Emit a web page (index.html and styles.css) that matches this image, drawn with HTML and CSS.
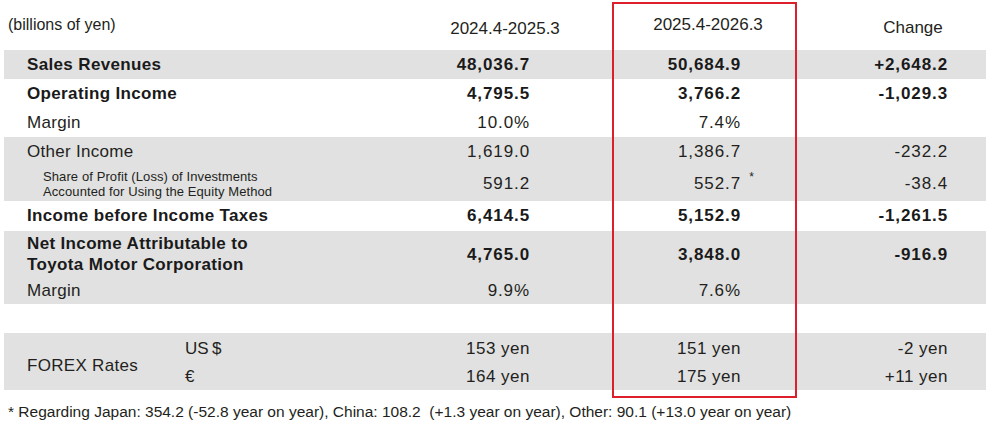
FILE: index.html
```html
<!DOCTYPE html>
<html lang="en">
<head>
<meta charset="utf-8">
<title>Financial Forecast</title>
<link rel="stylesheet" href="styles.css">
</head>
<body>
<div class="sheet">
  <div class="head">
    <div class="unit">(billions of yen)</div>
    <div class="h h1">2024.4-2025.3</div>
    <div class="h h2">2025.4-2026.3</div>
    <div></div>
    <div class="h h3">Change</div>
  </div>

  <div class="row band bold">
    <div class="label">Sales Revenues</div>
    <div class="num">48,036.7</div>
    <div class="num">50,684.9</div>
    <div class="num">+2,648.2</div>
  </div>
  <div class="row bold">
    <div class="label">Operating Income</div>
    <div class="num">4,795.5</div>
    <div class="num">3,766.2</div>
    <div class="num">-1,029.3</div>
  </div>
  <div class="row">
    <div class="label">Margin</div>
    <div class="num">10.0%</div>
    <div class="num">7.4%</div>
    <div class="num"></div>
  </div>

  <div class="band">
    <div class="row">
      <div class="label">Other Income</div>
      <div class="num">1,619.0</div>
      <div class="num">1,386.7</div>
      <div class="num">-232.2</div>
    </div>
    <div class="row row-share">
      <div class="label sub">Share of Profit (Loss) of Investments<br>Accounted for Using the Equity Method</div>
      <div class="num">591.2</div>
      <div class="num marked">552.7<span class="mark">*</span></div>
      <div class="num">-38.4</div>
    </div>
  </div>

  <div class="row bold row-tax">
    <div class="label">Income before Income Taxes</div>
    <div class="num">6,414.5</div>
    <div class="num">5,152.9</div>
    <div class="num">-1,261.5</div>
  </div>

  <div class="band">
    <div class="row bold row-net">
      <div class="label">Net Income Attributable to<br>Toyota Motor Corporation</div>
      <div class="num">4,765.0</div>
      <div class="num">3,848.0</div>
      <div class="num">-916.9</div>
    </div>
    <div class="row row-margin2">
      <div class="label">Margin</div>
      <div class="num">9.9%</div>
      <div class="num">7.6%</div>
      <div class="num"></div>
    </div>
  </div>

  <div class="forex band">
    <div class="fx-title">FOREX Rates</div>
    <div class="fx-cur">US&#8201;$</div>
    <div class="num yen">153 yen</div>
    <div class="num yen">151 yen</div>
    <div class="num yen">-2 yen</div>
    <div></div>
    <div class="fx-cur">€</div>
    <div class="num yen">164 yen</div>
    <div class="num yen">175 yen</div>
    <div class="num yen">+11 yen</div>
    <div></div>
  </div>

  <p class="note">* Regarding Japan: 354.2 (-52.8 year on year), China: 108.2&nbsp; (+1.3 year on year), Other: 90.1 (+13.0 year on year)</p>

  <div class="highlight"></div>
</div>
</body>
</html>
```

FILE: styles.css
```css
html, body {
  margin: 0;
  padding: 0;
  background: #ffffff;
}

body {
  font-family: "Liberation Sans", Arial, sans-serif;
  color: #231f20;
  width: 1000px;
  height: 429px;
  overflow: hidden;
}

.sheet {
  position: relative;
  width: 982px;
  margin-left: 4px;
}

.head {
  display: grid;
  grid-template-columns: 396px 210px 196px 44px 126px;
  height: 50px;
  align-items: start;
  font-size: 17px;
  line-height: 20px;
}

.unit {
  font-size: 16px;
  padding-left: 4px;
  padding-top: 15px;
}

.h {
  text-align: center;
}

.h1 { padding-top: 19px; }
.h2 { padding-top: 15px; }
.h3 { padding-top: 18px; }

.row {
  display: grid;
  grid-template-columns: 325px 200px 211px 207px 39px;
  align-items: center;
  height: 29px;
  font-size: 17px;
  line-height: 20px;
}

.band {
  background: #e1e1e1;
}

.label {
  padding-left: 23px;
  letter-spacing: 0.3px;
}

.bold {
  font-weight: bold;
  color: #1a1a1a;
}

.bold .label {
  letter-spacing: 0.35px;
}

.num {
  text-align: right;
  letter-spacing: 0.9px;
  margin-right: -1px;
}

.num.yen {
  letter-spacing: 0.5px;
}

.row-share {
  height: 35px;
}

.sub {
  padding-left: 39px;
  font-size: 13px;
  line-height: 15px;
  letter-spacing: 0.1px;
}

.marked {
  position: relative;
}

.mark {
  position: absolute;
  right: -13px;
  top: -7px;
  font-size: 12px;
  letter-spacing: 0;
}

.row-tax {
  height: 30px;
}

.row-net {
  height: 46px;
  line-height: 21px;
}

.row-margin2 {
  height: 27px;
}

.forex {
  display: grid;
  grid-template-columns: 181px 144px 200px 211px 207px 39px;
  grid-template-rows: 28px 27px;
  align-items: center;
  margin-top: 29px;
  padding-top: 2px;
  font-size: 17px;
  line-height: 20px;
}

.fx-title {
  grid-row: span 2;
  padding-left: 23px;
  padding-top: 6px;
  letter-spacing: 0.3px;
}

.fx-cur {
  letter-spacing: 0;
}

.note {
  margin: 12px 0 0 4px;
  font-size: 15.5px;
  line-height: 20px;
}

.highlight {
  position: absolute;
  left: 608px;
  top: 2px;
  width: 185px;
  height: 396px;
  box-sizing: border-box;
  border: 2px solid #dc1f2b;
  pointer-events: none;
}
```
